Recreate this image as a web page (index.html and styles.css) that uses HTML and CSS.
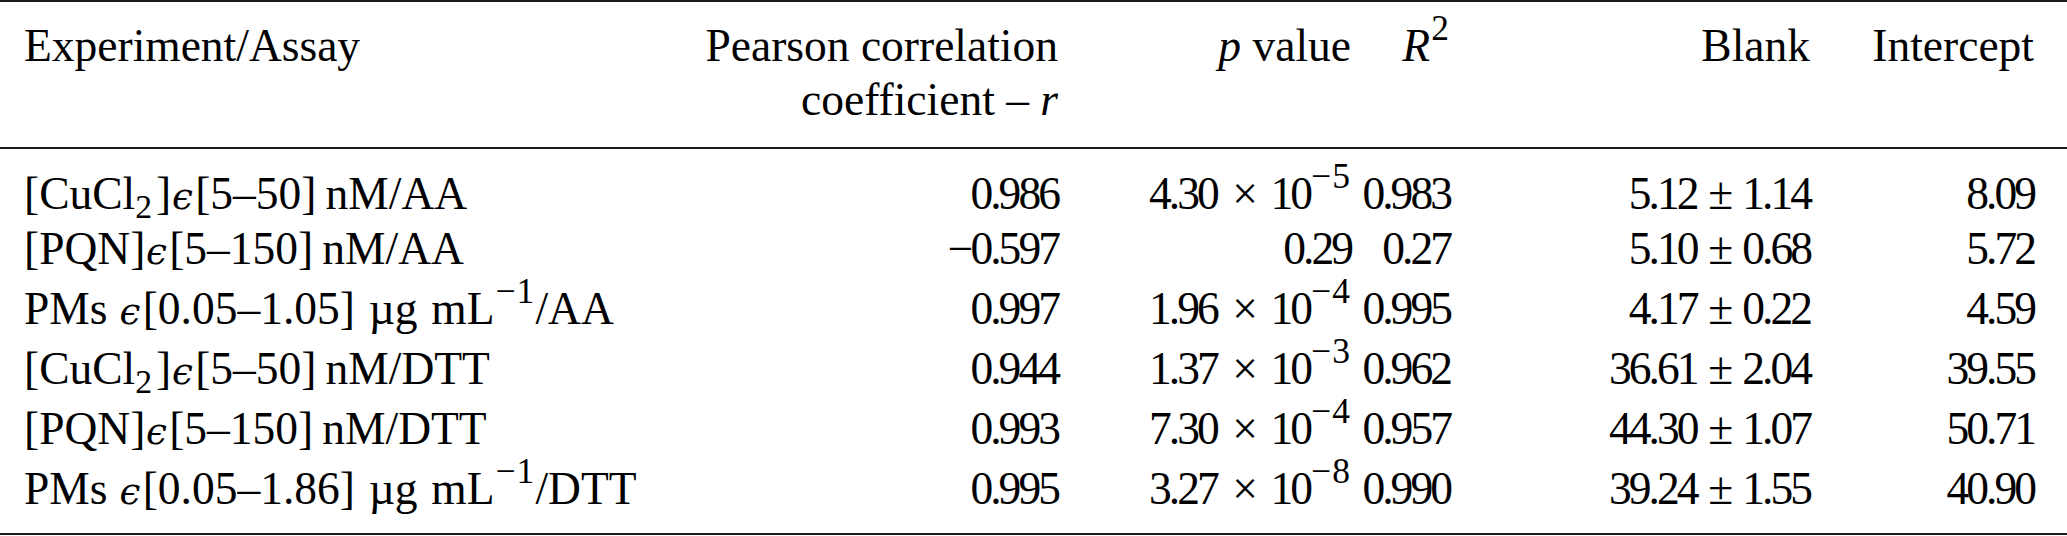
FILE: index.html
```html
<!DOCTYPE html>
<html>
<head>
<meta charset="utf-8">
<link rel="stylesheet" href="styles.css">
</head>
<body>
<div class="table">
  <div class="row head">
    <div class="cell left">Experiment/Assay</div>
    <div class="cell">Pearson correlation<br>coefficient – <i>r</i></div>
    <div class="cell"><i>p</i> value</div>
    <div class="cell"><i>R</i><sup>2</sup></div>
    <div class="cell">Blank</div>
    <div class="cell">Intercept</div>
  </div>
  <div class="body">
    <div class="row tall">
      <div class="cell left">[CuCl<sub>2</sub>]<i class="eps">ϵ</i>[5–50]&thinsp;nM/AA</div>
      <div class="cell num">0.986</div>
      <div class="cell num">4.30<span class="op">×</span>10<sup>−5</sup></div>
      <div class="cell num">0.983</div>
      <div class="cell num">5.12<span class="pm">±</span>1.14</div>
      <div class="cell num">8.09</div>
    </div>
    <div class="row">
      <div class="cell left">[PQN]<i class="eps">ϵ</i>[5–150]&thinsp;nM/AA</div>
      <div class="cell num">−0.597</div>
      <div class="cell num">0.29</div>
      <div class="cell num">0.27</div>
      <div class="cell num">5.10<span class="pm">±</span>0.68</div>
      <div class="cell num">5.72</div>
    </div>
    <div class="row tall">
      <div class="cell left">PMs <i class="eps">ϵ</i>[0.05–1.05]<span class="unit">µg</span><span class="unit">mL<sup>−1</sup></span>/AA</div>
      <div class="cell num">0.997</div>
      <div class="cell num">1.96<span class="op">×</span>10<sup>−4</sup></div>
      <div class="cell num">0.995</div>
      <div class="cell num">4.17<span class="pm">±</span>0.22</div>
      <div class="cell num">4.59</div>
    </div>
    <div class="row tall">
      <div class="cell left">[CuCl<sub>2</sub>]<i class="eps">ϵ</i>[5–50]&thinsp;nM/DTT</div>
      <div class="cell num">0.944</div>
      <div class="cell num">1.37<span class="op">×</span>10<sup>−3</sup></div>
      <div class="cell num">0.962</div>
      <div class="cell num">36.61<span class="pm">±</span>2.04</div>
      <div class="cell num">39.55</div>
    </div>
    <div class="row tall">
      <div class="cell left">[PQN]<i class="eps">ϵ</i>[5–150]&thinsp;nM/DTT</div>
      <div class="cell num">0.993</div>
      <div class="cell num">7.30<span class="op">×</span>10<sup>−4</sup></div>
      <div class="cell num">0.957</div>
      <div class="cell num">44.30<span class="pm">±</span>1.07</div>
      <div class="cell num">50.71</div>
    </div>
    <div class="row tall">
      <div class="cell left">PMs <i class="eps">ϵ</i>[0.05–1.86]<span class="unit">µg</span><span class="unit">mL<sup>−1</sup></span>/DTT</div>
      <div class="cell num">0.995</div>
      <div class="cell num">3.27<span class="op">×</span>10<sup>−8</sup></div>
      <div class="cell num">0.990</div>
      <div class="cell num">39.24<span class="pm">±</span>1.55</div>
      <div class="cell num">40.90</div>
    </div>
  </div>
</div>
</body>
</html>
```

FILE: styles.css
```css
html, body {
  margin: 0;
  padding: 0;
  background: #ffffff;
}

body {
  font-family: "Liberation Serif", "Times New Roman", serif;
  font-size: 45.5px;
  color: #000000;
}

.table {
  width: 2067px;
  border-top: 2px solid #1a1a1a;
  border-bottom: 2px solid #1a1a1a;
}

.row {
  display: grid;
  grid-template-columns: 676px 358px 293px 99px 360px 224px;
  padding: 0 33px 0 24px;
  white-space: nowrap;
}

.cell {
  text-align: right;
}

.cell.left {
  text-align: left;
}

.num {
  letter-spacing: -0.065em;
}

.head {
  line-height: 54px;
  padding-top: 17px;
  padding-bottom: 20px;
  border-bottom: 2px solid #1a1a1a;
}

.body {
  padding: 12px 0 17px;
}

.body .row {
  line-height: 55px;
}

.body .row.tall {
  padding-top: 5px;
}

sup {
  font-size: 0.78em;
  line-height: 0;
  vertical-align: 0.58em;
  letter-spacing: 0.03em;
  margin-left: 0.03em;
}

sub {
  font-size: 0.74em;
  line-height: 0;
  vertical-align: -0.28em;
  margin-right: 0.12em;
}

.eps {
  font-family: "DejaVu Serif", serif;
  font-size: 0.82em;
  font-style: italic;
  line-height: 0;
  margin: 0 0.06em 0 0.02em;
}

.unit {
  margin-left: 0.3em;
}

.op {
  margin: 0 0.34em;
}

.pm {
  margin: 0 0.26em;
}
```
